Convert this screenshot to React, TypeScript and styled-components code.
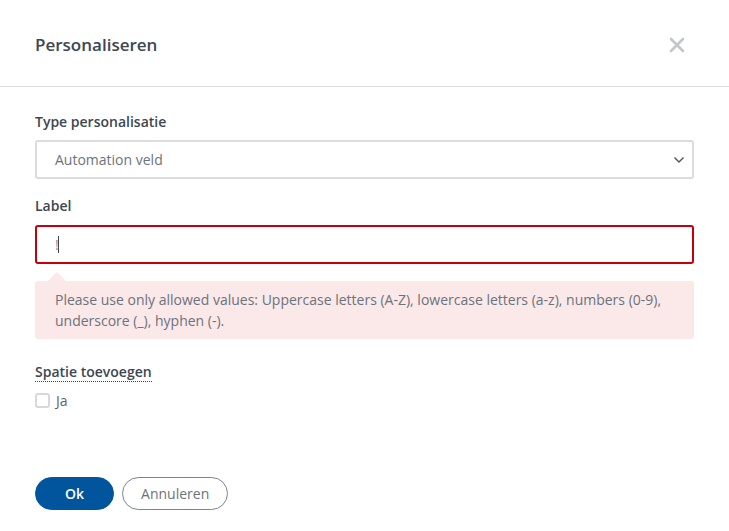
import React from 'react'
import styled, { createGlobalStyle } from 'styled-components'

const GlobalStyle = createGlobalStyle`
  html, body {
    margin: 0;
    padding: 0;
    background: #fff;
  }
  body {
    font-family: 'Open Sans', 'Liberation Sans', sans-serif;
    color: #3d4651;
  }
  * {
    box-sizing: border-box;
  }
`

function App() {
  return (
    <>
      <GlobalStyle />
      <Modal>
        <Header>
          <Title>Personaliseren</Title>
          <CloseButton aria-label="Sluiten">
            <svg width="16" height="16" viewBox="0 0 16 16">
              <path d="M2 2 L14 14 M14 2 L2 14" stroke="#c3c6ca" strokeWidth="2.6" strokeLinecap="round" />
            </svg>
          </CloseButton>
        </Header>
        <Body>
          <Field>
            <FieldLabel>Type personalisatie</FieldLabel>
            <SelectBox>
              <span>Automation veld</span>
              <svg width="12" height="8" viewBox="0 0 12 8">
                <path d="M1.5 1.5 L6 6 L10.5 1.5" stroke="#4a525c" strokeWidth="1.4" fill="none" />
              </svg>
            </SelectBox>
          </Field>
          <Field>
            <FieldLabel>Label</FieldLabel>
            <TextInput $error>
              <span>!</span>
              <Caret />
            </TextInput>
            <ErrorTip>
              Please use only allowed values: Uppercase letters (A-Z), lowercase letters (a-z), numbers (0-9),
              underscore (_), hyphen (-).
            </ErrorTip>
          </Field>
          <Field $gap={9}>
            <HintLabel>Spatie toevoegen</HintLabel>
            <CheckRow>
              <CheckBox />
              <span>Ja</span>
            </CheckRow>
          </Field>
        </Body>
        <Footer>
          <Button $primary>Ok</Button>
          <Button>Annuleren</Button>
        </Footer>
      </Modal>
    </>
  )
}

const Modal = styled.div`
  width: 729px;
  height: 531px;
  display: flex;
  flex-direction: column;
  background: #fff;
`

const Header = styled.div`
  height: 87px;
  display: flex;
  align-items: center;
  justify-content: space-between;
  padding: 3px 44px 0 35px;
  border-bottom: 1px solid #dcdee0;
`

const Title = styled.h1`
  margin: 0;
  font-size: 17px;
  font-weight: 600;
  color: #3d4651;
`

const CloseButton = styled.button`
  border: 0;
  background: none;
  padding: 0;
  display: flex;
  cursor: pointer;
`

const Body = styled.div`
  display: flex;
  flex-direction: column;
  padding: 25px 35px 0 35px;
`

const Field = styled.div<{ $gap?: number }>`
  display: flex;
  flex-direction: column;
  gap: ${p => p.$gap ?? 8}px;
  margin-bottom: 17px;
`

const FieldLabel = styled.label`
  font-size: 14px;
  font-weight: 600;
  color: #3d4651;
  line-height: 20px;
`

const HintLabel = styled.span`
  align-self: flex-start;
  font-size: 14px;
  font-weight: 600;
  color: #3d4651;
  line-height: 19px;
  border-bottom: 1px dotted #3d4651;
  margin-top: 6px;
`

const SelectBox = styled.div`
  height: 39px;
  display: flex;
  align-items: center;
  justify-content: space-between;
  padding: 0 7px 0 18px;
  border: 2px solid #dadcde;
  border-radius: 3px;
  font-size: 14px;
  color: #6b737d;
`

const TextInput = styled.div<{ $error?: boolean }>`
  height: 39px;
  margin-top: 1px;
  display: flex;
  align-items: center;
  padding: 0 18px;
  border: 2px solid ${p => (p.$error ? '#c4000e' : '#dadcde')};
  border-radius: 3px;
  font-size: 14px;
  color: #8a9098;
`

const Caret = styled.span`
  display: inline-block;
  width: 1px;
  height: 17px;
  background: #3d4651;
  margin-left: -1px;
`

const ErrorTip = styled.div`
  position: relative;
  margin-top: 9px;
  background: #fbe8e8;
  border-radius: 3px;
  padding: 8px 20px 8px 20px;
  font-size: 14px;
  line-height: 21px;
  color: #6b737d;

  &::before {
    content: '';
    position: absolute;
    top: -9px;
    left: 13px;
    border-left: 9px solid transparent;
    border-right: 9px solid transparent;
    border-bottom: 9px solid #fbe8e8;
  }
`

const CheckRow = styled.label`
  display: flex;
  align-items: center;
  gap: 6px;
  font-size: 14px;
  color: #5c646e;
`

const CheckBox = styled.span`
  width: 15px;
  height: 15px;
  border: 2px solid #d6d8da;
  border-radius: 3px;
  background: #fff;
`

const Footer = styled.div`
  display: flex;
  gap: 8px;
  padding: 0 35px;
  margin-top: auto;
  margin-bottom: 21px;
`

const Button = styled.button<{ $primary?: boolean }>`
  height: 33px;
  padding: 0 ${p => (p.$primary ? 29 : 18)}px;
  border-radius: 17px;
  font-family: 'Open Sans', 'Liberation Sans', sans-serif;
  font-size: 14px;
  font-weight: ${p => (p.$primary ? 600 : 400)};
  cursor: pointer;
  border: 1px solid ${p => (p.$primary ? '#00559c' : '#7c838b')};
  background: ${p => (p.$primary ? '#00559c' : '#fff')};
  color: ${p => (p.$primary ? '#fff' : '#6b737d')};
`

export default App
